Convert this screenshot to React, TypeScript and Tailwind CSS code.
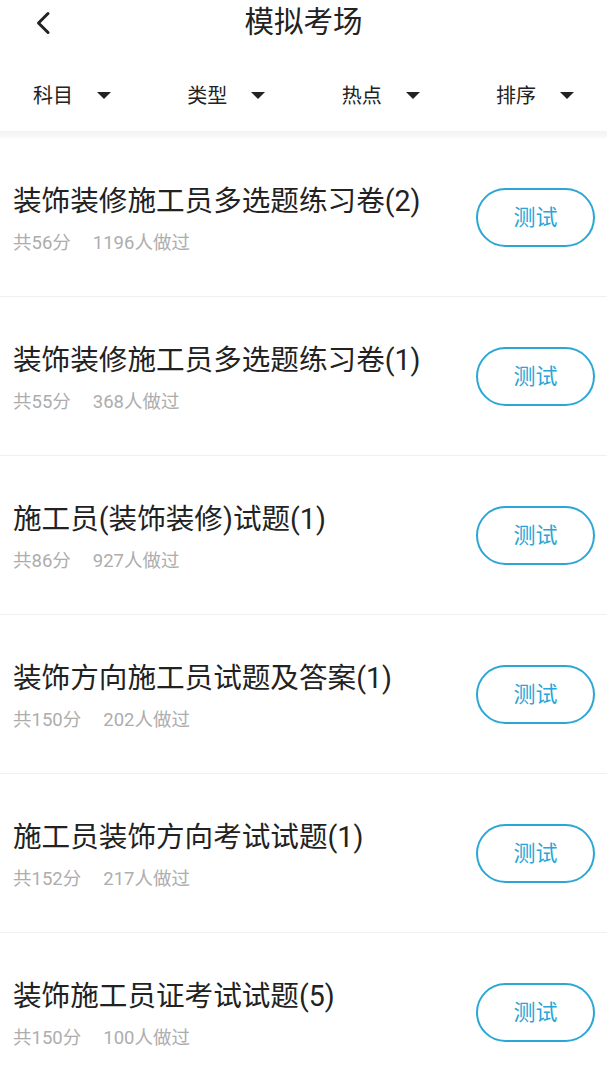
import React from 'react'

type Paper = {
  title: string
  score: number
  count: number
}

const papers: Paper[] = [
  { title: '装饰装修施工员多选题练习卷(2)', score: 56, count: 1196 },
  { title: '装饰装修施工员多选题练习卷(1)', score: 55, count: 368 },
  { title: '施工员(装饰装修)试题(1)', score: 86, count: 927 },
  { title: '装饰方向施工员试题及答案(1)', score: 150, count: 202 },
  { title: '施工员装饰方向考试试题(1)', score: 152, count: 217 },
  { title: '装饰施工员证考试试题(5)', score: 150, count: 100 },
]

const filters = ['科目', '类型', '热点', '排序']

const font = { fontFamily: 'Roboto, "Noto Sans CJK SC", sans-serif' }

const App = () => {
  return (
    <div className="min-h-screen w-full bg-white" style={font}>
      {/* Header */}
      <div className="relative flex h-[46px] items-center justify-center">
        <button className="absolute left-[33px] top-[11px] flex h-[24px] w-[20px] items-center justify-center">
          <svg width="18" height="24" viewBox="0 0 18 24" fill="none">
            <path
              d="M14 2.5 L4.5 12 L14 21.5"
              stroke="#222"
              strokeWidth="3"
              strokeLinecap="round"
              strokeLinejoin="round"
            />
          </svg>
        </button>
        <h1 className="text-[29.5px] leading-none text-[#222]">模拟考场</h1>
      </div>

      {/* Filters */}
      <div className="mt-[14px] flex h-[71px] items-center justify-between px-[33px]">
        {filters.map((f) => (
          <div key={f} className="flex items-center gap-[24px]">
            <span className="text-[20px] leading-none text-[#222]">{f}</span>
            <svg width="14" height="7" viewBox="0 0 14 7">
              <path d="M0 0 H14 L7 7 Z" fill="#222" />
            </svg>
          </div>
        ))}
      </div>
      <div className="h-[7px] bg-gradient-to-b from-[#f3f3f3] to-[#fafafa]" />

      {/* List */}
      <div>
        {papers.map((p) => (
          <div
            key={p.title}
            className="flex h-[159px] items-center justify-between border-b border-[#f0f0f0] pl-[13px] pr-[12px]"
          >
            <div className="flex flex-col pt-[4px]">
              <div className="text-[28.6px] leading-[34px] text-[#222]">{p.title}</div>
              <div className="mt-[13px] flex gap-[22px] text-[18.5px] leading-[24px] text-[#adadad]">
                <span>共{p.score}分</span>
                <span>{p.count}人做过</span>
              </div>
            </div>
            <button className="flex h-[59px] w-[119px] items-center justify-center rounded-full border-2 border-[#2ba7d6] text-[22px] text-[#29a5d6]">
              测试
            </button>
          </div>
        ))}
      </div>
    </div>
  )
}

export default App
